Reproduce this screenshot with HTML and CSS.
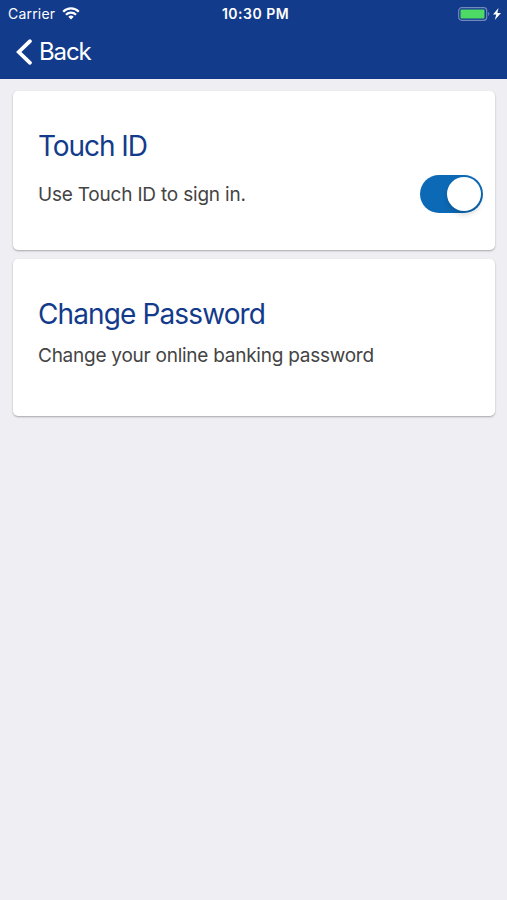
FILE: index.html
```html
<!DOCTYPE html>
<html lang="en">
<head>
<meta charset="utf-8">
<title>Settings</title>
<link rel="stylesheet" href="styles.css">
</head>
<body>
<header class="header">
  <div class="status">
    <div class="carrier"><span class="carrier-name">Carrier</span>
      <svg class="wifi" width="18" height="14" viewBox="0 0 18 14" fill="none" stroke="#fff" stroke-width="2.3"><path d="M1.2 4.7a11 11 0 0 1 15.6 0M4 7.7a7 7 0 0 1 10 0"/><path d="M6.3 9.7a3.9 3.9 0 0 1 5.4 0L9 12.5z" fill="#fff" stroke="none"/></svg>
    </div>
    <span class="time">10:30 PM</span>
    <div class="power">
      <svg width="44" height="14" viewBox="0 0 44 14"><rect x=".7" y=".7" width="28" height="12.6" rx="3" fill="none" stroke="#7189bd" stroke-width="1.2"/><rect x="2.5" y="2.5" width="24" height="9" rx="1" fill="#4cd964"/><path d="M30.2 4.8q2.4 2.2 0 4.4z" fill="#7189bd"/><path d="M40.5 1 35 7.5h3.3L36.8 13 43 6h-3.6z" fill="#fff"/></svg>
    </div>
  </div>
  <div class="nav">
    <svg width="17" height="28" viewBox="0 0 17 28" fill="none" stroke="#fff" stroke-width="3.8" stroke-linecap="round"><path d="M14 3.2 2.8 14 14 24.8"/></svg>
    <span class="back">Back</span>
  </div>
</header>
<main class="content">
  <section class="card touch">
    <h2 class="title touch-title">Touch ID</h2>
    <div class="row"><p class="text touch-text">Use Touch ID to sign in.</p><div class="switch" role="switch" aria-checked="true" aria-label="Touch ID"><span class="knob"></span></div></div>
  </section>
  <section class="card password">
    <h2 class="title password-title">Change Password</h2>
    <p class="text password-text">Change your online banking password</p>
  </section>
</main>
</body>
</html>
```

FILE: styles.css
```css
* { box-sizing: border-box; }
body { margin: 0; min-height: 900px; background: #eeeef3; font-family: Inter, "Liberation Sans", sans-serif; }
h2, p { margin: 0; font-weight: 400; }
svg { display: block; }
.header { height: 79px; background: #133b8b; color: #fff; }
.status { height: 27px; display: grid; grid-template-columns: 1fr auto 1fr; align-items: center; padding: 0 4px 0 8px; font-size: 14px; }
.carrier { display: flex; align-items: center; gap: 7px; }
.carrier-name { letter-spacing: .2px; }
.time { font-size: 14px; font-weight: 600; letter-spacing: .5px; }
.power { justify-self: end; padding-right: 1px; }
.nav { height: 50px; display: flex; align-items: center; gap: 6px; padding-left: 16px; }
.back { font-size: 24px; line-height: 30px; letter-spacing: -1.1px; }
.content { display: flex; flex-direction: column; gap: 9px; padding: 12px 12px 0 13px; }
.card { background: #fff; border-radius: 5px; box-shadow: 0 1px 2px rgba(0,0,0,.3); }
.touch { height: 159px; padding: 37px 12px 0 25px; }
.password { height: 157px; padding: 37px 12px 0 25px; }
.title { color: #133b8b; font-size: 28px; line-height: 37px; letter-spacing: -.88px; white-space: nowrap; }
.touch-title { letter-spacing: -1.05px; }
.text { color: #444; font-size: 19px; line-height: 26px; letter-spacing: -.25px; white-space: nowrap; }
.row { display: flex; align-items: center; justify-content: space-between; height: 38px; margin-top: 10px; }
.touch-text { padding-top: 2px; letter-spacing: -.2px; }
.password-text { margin-top: 10px; }
.switch { width: 63px; height: 38px; border-radius: 19px; background: #0c69b5; padding: 2px; display: flex; justify-content: flex-end; }
.knob { width: 34px; height: 34px; border-radius: 50%; background: #fff; box-shadow: 0 4px 5px rgba(0,0,0,.14); }
```
